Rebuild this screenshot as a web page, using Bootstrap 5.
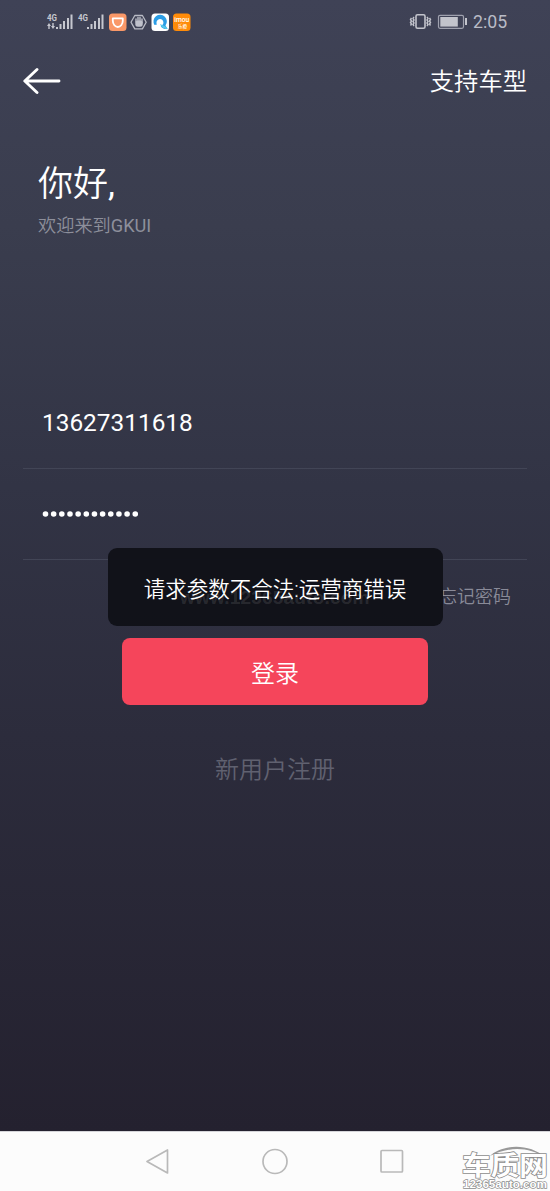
<!DOCTYPE html>
<html lang="zh-CN">
<head>
<meta charset="utf-8">
<meta name="viewport" content="width=device-width, initial-scale=1">
<title>登录</title>
<link href="https://cdn.jsdelivr.net/npm/bootstrap@5.3.0/dist/css/bootstrap.min.css" rel="stylesheet">
<style>
body{font-family:Roboto,"Noto Sans CJK SC",sans-serif;font-weight:350;background:#fcfcfc;line-height:1}
.screen{height:1191px;overflow:hidden}
.login-page{height:1131px;background:linear-gradient(#3f4256 0,#3a3d4e 20%,#323445 43%,#2c2c3c 65%,#24212f 100%);color:#fff}
.status{height:44px;padding:0 44px 0 46px;color:#b9bbc6;font-size:17.7px;font-weight:400}
.status-time{margin-left:4px;white-space:nowrap;width:33px;padding-top:2px}
.topbar{height:74px;padding:0 23px;font-size:24.3px}
.topbar span{padding-top:3px}
.hello{padding:46px 39px 0 38px}
.hello h1{font-size:35px;font-weight:350;line-height:42px;margin:0}
.hello p{font-size:18.2px;line-height:24px;margin:8px 0 0;color:#8d8f9b}
.latin{font-weight:400}
.fields{margin:140px 23px 0;padding:0}
.field{border-bottom:1px solid #424556;height:91px;padding:0 19px}
.field.phone{font-size:24.4px;font-weight:400;padding-top:1px}
.forgot{height:78px;padding:0 39px 5px;font-size:18px;color:#898a98}
.login-btn,.login-btn:hover{width:306px;height:67px;background:#f5455b;color:#fff;border:0;border-radius:8px;font-size:24px;font-weight:350;padding:4px 0 0}
.register{font-size:24px;color:#606170;margin-top:52px;line-height:26px;text-decoration:none}
.toast-box{left:107.500px;top:548px;width:335px;height:78px;border-radius:9px;background:rgba(16,17,24,.96);font-size:21.5px;padding-top:5px}
.wm{left:180px;top:588px;z-index:2;font:bold 19px/20px "Liberation Sans",sans-serif;color:rgba(255,255,255,.11);letter-spacing:.2px}
.toast-text{z-index:3}
.sysnav{height:60px;border-top:1px solid #d5d5d9}
.brand{right:0;bottom:0}
</style>
</head>
<body>
<div class="screen position-relative">
<main class="login-page d-flex flex-column">
  <div class="status d-flex align-items-center justify-content-between">
    <svg width="146" height="24" viewBox="46 10 146 24" aria-label="信号">
      <g fill="#c6c7cf">
        <g font-family="Roboto" font-size="9.500" font-weight="700"><text x="47" y="21" textLength="10" lengthAdjust="spacingAndGlyphs">4G</text><text x="78" y="21" textLength="10" lengthAdjust="spacingAndGlyphs">4G</text></g>
        <path d="M56 27h2v2h-2zM59.500 24h2v5h-2zM63 21h2v8h-2zM67 18h2v11h-2zM70.500 14.500h2v14.500h-2zM87 27h2v2h-2zM90.500 24h2v5h-2zM94 21h2v8h-2zM98 18h2v11h-2zM101.500 14.500h2v14.500h-2z"/>
        <path d="M47 26l2-3 2 3h-1.300v3h-1.400v-3zM51 26h1.300v-3h1.400v3h1.300l-2 3z"/>
      </g>
      <rect x="109" y="13.500" width="17.500" height="17.500" rx="3.500" fill="#fa9868"/>
      <path d="M112.800 18.300h10v2.500c0 3.500-2.500 6.200-5 6.200s-5-2.700-5-6.200z" fill="none" stroke="#fff" stroke-width="1.800" stroke-linejoin="round"/>
      <path d="M134.800 15.500h7.600l3.800 6.700-3.800 6.700h-7.600l-3.800-6.700z" fill="none" stroke="#b9bbc5" stroke-width="1.300" stroke-linejoin="round"/>
      <path d="M136 22v-3M138 21v-3.500M140 21v-3.500M142 23v-4" fill="none" stroke="#bfc1cb" stroke-width="1.400" stroke-linecap="round"/><rect x="135.300" y="20.500" width="7.400" height="6.300" rx="2.500" fill="#bfc1cb"/>
      <rect x="151.500" y="13.500" width="17.500" height="17.500" rx="3.500" fill="#fff"/>
      <path d="M154.500 25a6.700 6.700 0 1 1 11 .5l2 3.500c-3 .3-5.500-.5-6.800-3a3.500 3.500 0 1 0-3.700-1.500z" fill="#2b9de6"/><path d="M160 24c1 3 4 5 7.500 5l-1-2z" fill="#55c7ec"/>
      <rect x="173" y="13.500" width="17.500" height="17.500" rx="3.500" fill="#ff8b08"/>
      <text x="174.300" y="22" fill="#fff" font-family="Roboto" font-size="8" font-weight="500" textLength="15" lengthAdjust="spacingAndGlyphs">imou</text>
      <text x="178" y="28" fill="#fff" font-family="Noto Sans CJK SC" font-size="4.500" font-weight="500">乐橙</text>
    </svg>
    <div class="d-flex align-items-center">
      <svg width="61" height="20" viewBox="408 12 61 20" fill="none" stroke="#c3c4cc" aria-label="电量">
        <rect x="416" y="14.800" width="9" height="13.500" rx="1.500" stroke-width="1.600"/>
        <path d="M414 17l-1 1.500 1 1.500-1 1.500 1 1.500-1 1.500 1 1.500M411.500 18l-1 1.500 1 1.500-1 1.500 1 1.500-1 1.500M427 17l1 1.500-1 1.500 1 1.500-1 1.500 1 1.500-1 1.500M429.500 18l1 1.500-1 1.500 1 1.500-1 1.500 1 1.500" stroke-width="1.400"/>
        <rect x="438.500" y="15.300" width="25" height="13" rx="1.500" stroke="#9fa1ae" stroke-width="1.200"/><rect x="440.300" y="17" width="17.500" height="9.600" fill="#c3c4cc" stroke="none"/><path d="M466 18v7" stroke-width="2"/>
      </svg>
      <span class="status-time">2:05</span>
    </div>
  </div>
  <header class="topbar d-flex align-items-center justify-content-between">
    <svg width="38" height="28" viewBox="0 0 38 28" fill="none" stroke="#fff" stroke-width="2.900" stroke-linecap="round" stroke-linejoin="round"><path d="M14 2.500L1.800 14 14 25.500M2 14h34"/></svg>
    <span>支持车型</span>
  </header>
  <section class="hello"><h1>你好<span class="latin">,</span></h1><p>欢迎来到<span class="latin">GKUI</span></p></section>
  <section class="fields">
    <div class="field phone d-flex align-items-center">13627311618</div>
    <div class="field d-flex align-items-center"><svg width="100" height="8" viewBox="0 0 100 8" aria-label="密码"><path d="M3.500 4h92" stroke="#fff" stroke-width="5.600" stroke-linecap="round" stroke-dasharray="0 8.160"/></svg></div>
  </section>
  <div class="forgot d-flex justify-content-end align-items-center"><span>忘记密码</span></div>
  <button class="btn login-btn align-self-center" type="button">登录</button>
  <a class="register align-self-center">新用户注册</a>
</main>
<nav class="sysnav d-flex align-items-center">
  <svg width="550" height="59" viewBox="0 0 550 59" fill="none" stroke="#b9b9b9" stroke-width="1.700" stroke-linejoin="round"><path d="M147 29.500L167.500 18v23z"/><circle cx="275" cy="29.500" r="12"/><rect x="381" y="18.500" width="21.500" height="21.500" rx="1"/></svg>
</nav>
<div class="wm position-absolute">www.12365auto.com</div>
<div class="toast-box position-absolute d-flex align-items-center justify-content-center text-white" role="alert"><span class="toast-text position-relative">请求参数不合法:运营商错误</span></div>
<svg class="brand position-absolute" width="92" height="48" viewBox="458 1143 92 48" fill="#fff" stroke="#8d8d8d" stroke-width=".8">
  <path d="M490 1156c12-11 38-14 56 2-17-11-36-12-56-2z" fill="#999" stroke="none"/>
  <g font-family="Noto Sans CJK SC" font-weight="700" font-size="26" paint-order="stroke" stroke-width="1.600"><text x="462" y="1175" textLength="86" lengthAdjust="spacingAndGlyphs">车质网</text></g>
  <text x="463" y="1187.500" font-family="Liberation Sans" font-size="11" font-weight="700" textLength="84" lengthAdjust="spacingAndGlyphs" paint-order="stroke" stroke-width="1.300">12365auto.com</text>
</svg>
</div>
<script src="https://cdn.jsdelivr.net/npm/bootstrap@5.3.0/dist/js/bootstrap.bundle.min.js"></script>
</body>
</html>
